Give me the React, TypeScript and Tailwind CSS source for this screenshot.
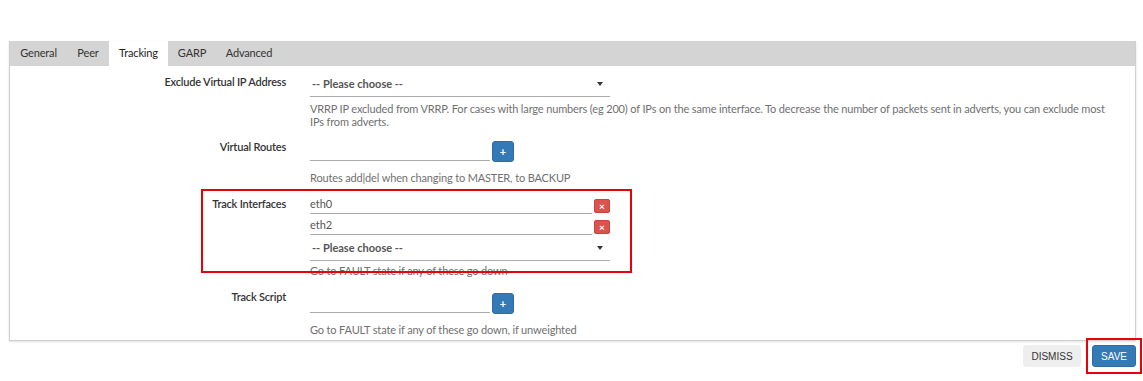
import React from "react";

const font = { fontFamily: '"Segoe UI", Lato, "Noto Sans", sans-serif' };

function Label({ children, pt }: { children: React.ReactNode; pt: string }) {
  return (
    <div className={`w-[276px] shrink-0 text-right text-[11px] leading-[16px] font-semibold tracking-[-0.2px] text-[#333] ${pt}`}>
      {children}
    </div>
  );
}

function Select({ h }: { h: string }) {
  return (
    <div className={`w-[300px] ${h} border-b border-[#aaa] flex items-center justify-between pl-[2px] pr-[7px]`}>
      <span className="text-[11px] leading-[16px] font-bold text-[#555]">-- Please choose --</span>
      <svg width="6" height="4" viewBox="0 0 6 4"><path d="M0 0h6L3 4z" fill="#333" /></svg>
    </div>
  );
}

function Help({ children, mt }: { children: React.ReactNode; mt: string }) {
  return (
    <div className={`${mt} text-[11px] leading-[13px] tracking-[-0.15px] text-[#707070] w-[800px]`}>{children}</div>
  );
}

function PlusRow() {
  return (
    <div className="flex items-start">
      <div className="w-[180px] h-[21px] border-b border-[#aaa]" />
      <button className="ml-[2px] mt-[1px] w-[22px] h-[21px] rounded-[3px] bg-[#337ab7] border border-[#2e6da4] flex items-center justify-center text-white text-[11px] font-bold leading-none">
        +
      </button>
    </div>
  );
}

function IfaceRow({ name }: { name: string }) {
  return (
    <div className="flex items-start">
      <div className="w-[282px] h-[21px] border-b border-[#aaa] flex items-end pb-[1px]">
        <span className="text-[11px] leading-[16px] text-[#555]">{name}</span>
      </div>
      <button className="ml-[2px] mt-[6px] w-[16px] h-[14px] rounded-[2px] bg-[#d9534f] border border-[#d43f3a] flex items-center justify-center text-white text-[10px] font-bold leading-none">
        ×
      </button>
    </div>
  );
}

const tabs: { t: string; w: string }[] = [
  { t: "General", w: "w-[57px]" },
  { t: "Peer", w: "w-[42px]" },
  { t: "Tracking", w: "w-[59px]" },
  { t: "GARP", w: "w-[48px]" },
  { t: "Advanced", w: "w-[66px]" },
];

export default function App() {
  return (
    <div className="bg-white w-[1143px] h-[381px] pt-[41px] pl-[9px] pr-[7px]" style={font}>
      <div className="border-x border-b border-[#cfcfcf] shadow-[0_1px_2px_rgba(0,0,0,0.12)] pb-[4px]">
        <div className="h-[25px] bg-[#d4d4d4] flex text-[11px] tracking-[-0.15px] text-[#333]">
          {tabs.map(({ t, w }) => (
            <div
              key={t}
              className={`${w} flex items-center justify-center ${t === "Tracking" ? "bg-white text-[#222]" : ""}`}
            >
              {t}
            </div>
          ))}
        </div>

        {/* Row 1 */}
        <div className="flex mt-[6px]">
          <Label pt="pt-[2px]">Exclude Virtual IP Address</Label>
          <div className="ml-[24px]">
            <Select h="h-[25px]" />
            <Help mt="mt-[5px]">
              VRRP IP excluded from VRRP. For cases with large numbers (eg 200) of IPs on the same interface. To decrease the number of packets sent in adverts, you can exclude most IPs from adverts.
            </Help>
          </div>
        </div>

        {/* Row 2 */}
        <div className="flex mt-[11px]">
          <Label pt="pt-0">Virtual Routes</Label>
          <div className="ml-[24px] pt-[1px]">
            <PlusRow />
            <Help mt="mt-[9px]">Routes add|del when changing to MASTER, to BACKUP</Help>
          </div>
        </div>

        {/* Row 3 */}
        <div className="flex mt-[9px] relative">
          <Label pt="pt-[3px]">Track Interfaces</Label>
          <div className="ml-[24px]">
            <IfaceRow name="eth0" />
            <IfaceRow name="eth2" />
            <Select h="h-[26px]" />
            <Help mt="mt-[3px]">Go to FAULT state if any of these go down</Help>
          </div>
          <div className="absolute left-[191px] top-[-4px] w-[431px] h-[84px] border-2 border-[#e8000b] pointer-events-none" />
        </div>

        {/* Row 4 */}
        <div className="flex mt-[12px]">
          <Label pt="pt-0">Track Script</Label>
          <div className="ml-[24px] pt-[3px]">
            <PlusRow />
            <Help mt="mt-[9px]">Go to FAULT state if any of these go down, if unweighted</Help>
          </div>
        </div>
      </div>

      <div className="flex justify-end mt-[4px] gap-[11px]" style={{ fontFamily: '"Liberation Sans", Arial, sans-serif' }}>
        <button className="w-[58px] h-[22px] rounded-[3px] bg-[#eeeeee] text-[10px] text-[#333] flex items-center justify-center">
          DISMISS
        </button>
        <div className="relative">
          <button className="w-[44px] h-[22px] rounded-[3px] bg-[#337ab7] border border-[#2e6da4] text-[10px] text-white flex items-center justify-center">
            SAVE
          </button>
          <div className="absolute left-[-6px] top-[-7px] right-[-6px] bottom-[-7px] border-2 border-[#e8000b] pointer-events-none" />
        </div>
      </div>
    </div>
  );
}
